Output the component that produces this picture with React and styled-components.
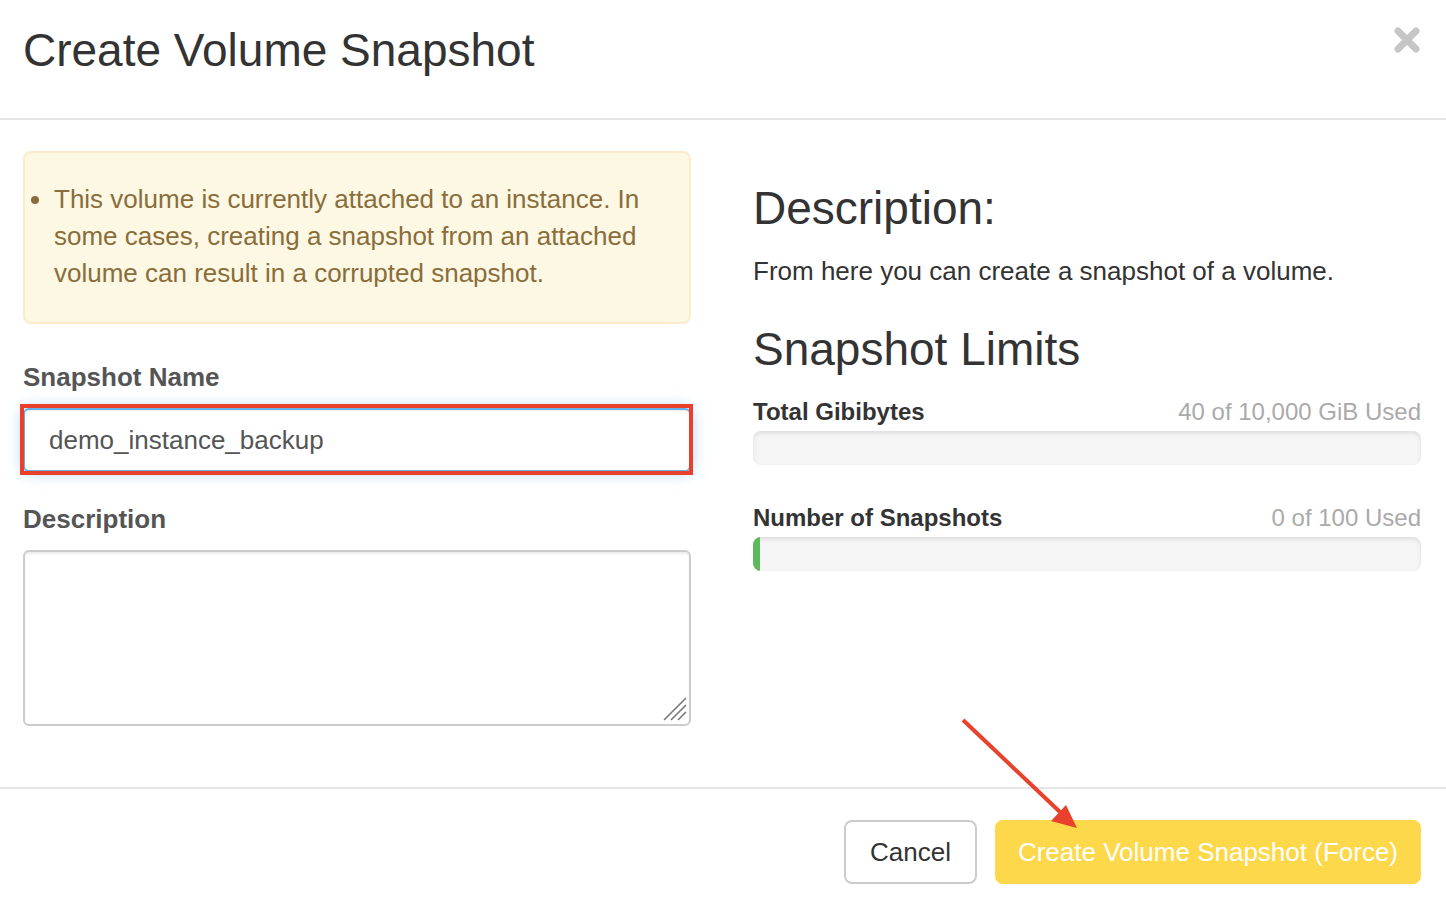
import React from 'react';
import styled, { createGlobalStyle } from 'styled-components';

const GlobalStyle = createGlobalStyle`
  html, body {
    margin: 0;
    padding: 0;
    background: #fff;
  }
  body {
    font-family: "Liberation Sans", Arial, Helvetica, sans-serif;
    color: #333;
  }
  * {
    box-sizing: border-box;
  }
`;

const Modal = styled('div')`
  position: relative;
  width: 1446px;
  height: 908px;
  background: #fff;
  overflow: hidden;
`;

const Header = styled('div')`
  height: 120px;
  padding: 25px 25px 0 23px;
  border-bottom: 2px solid #e5e5e5;
  display: flex;
  justify-content: space-between;
  align-items: flex-start;
`;

const Title = styled('h4')`
  margin: 0;
  font-size: 46px;
  line-height: 1.1;
  font-weight: 400;
  color: #333;
`;

const CloseButton = styled('button')`
  border: 0;
  background: none;
  padding: 0;
  margin-top: 2px;
  width: 28px;
  height: 26px;
  cursor: pointer;
`;

const Body = styled('div')`
  display: grid;
  grid-template-columns: 668px 668px;
  column-gap: 62px;
  padding: 31px 25px 60px 23px;
  height: 669px;
  border-bottom: 2px solid #e5e5e5;
`;

const Column = styled('div')`
  display: flex;
  flex-direction: column;
`;

const Alert = styled('div')`
  height: 173px;
  background: #fcf8e3;
  border: 2px solid #faebcc;
  border-radius: 8px;
  color: #8a6d3b;
  padding: 28px 20px 0 0;
`;

const AlertList = styled('ul')`
  margin: 0;
  padding-left: 29px;
  font-size: 26px;
  line-height: 37px;
`;

const FormGroup = styled('div')`
  margin-top: ${props => props.gap}px;
  display: flex;
  flex-direction: column;
`;

const Label = styled('label')`
  font-size: 26px;
  line-height: 37px;
  font-weight: 700;
  color: #555;
  margin-bottom: 12px;
`;

/* red call-out frame drawn around the focused name field */
const Highlight = styled('div')`
  position: relative;

  &::after {
    content: '';
    position: absolute;
    top: -4px;
    bottom: -3px;
    left: -3px;
    right: -2px;
    border: 4px solid #e8402a;
    pointer-events: none;
  }
`;

const NameInput = styled('input')`
  display: block;
  height: 64px;
  width: 100%;
  padding: 0 24px;
  font-family: inherit;
  font-size: 26px;
  color: #555;
  border: 2px solid #66afe9;
  border-radius: 6px;
  box-shadow: inset 0 1px 1px rgba(0, 0, 0, 0.075), 0 0 16px rgba(102, 175, 233, 0.6);
  outline: none;
`;

const TextAreaWrap = styled('div')`
  position: relative;
`;

const TextArea = styled('textarea')`
  display: block;
  height: 176px;
  width: 100%;
  padding: 12px 24px;
  font-family: inherit;
  font-size: 26px;
  border: 2px solid #ccc;
  border-radius: 6px;
  box-shadow: inset 0 2px 2px rgba(0, 0, 0, 0.075);
  resize: none;
`;

const Grip = styled('svg')`
  position: absolute;
  right: 3px;
  bottom: 4px;
  pointer-events: none;
`;

const Heading = styled('h3')`
  margin: ${props => props.top}px 0 0;
  font-size: 46px;
  line-height: 1.1;
  font-weight: 400;
  color: #333;
`;

const Paragraph = styled('p')`
  margin: 19px 0 0;
  font-size: 26px;
  line-height: 37px;
  color: #333;
`;

const QuotaRow = styled('div')`
  margin-top: ${props => props.top}px;
  display: flex;
  justify-content: space-between;
  align-items: baseline;
  font-size: 24px;
  line-height: 34px;
`;

const QuotaName = styled('strong')`
  font-weight: 700;
  color: #333;
`;

const QuotaUsage = styled('span')`
  color: #aaa;
`;

const Progress = styled('div')`
  margin-top: 2px;
  height: 34px;
  background: #f5f5f5;
  border-radius: 8px;
  box-shadow: inset 0 2px 4px rgba(0, 0, 0, 0.1);
  overflow: hidden;
`;

const ProgressFill = styled('div')`
  height: 100%;
  background: #5cb85c;
`;

const Footer = styled('div')`
  display: flex;
  justify-content: flex-end;
  gap: 18px;
  padding: 31px 25px 0;
`;

const Button = styled('button')`
  height: 64px;
  padding: 0 ${props => (props.primary ? 21 : 24)}px;
  font-family: inherit;
  font-size: 26px;
  border-radius: 8px;
  border: 2px solid ${props => (props.primary ? '#fcd84a' : '#ccc')};
  background: ${props => (props.primary ? '#fcd84a' : '#fff')};
  color: ${props => (props.primary ? '#fff' : '#333')};
  cursor: pointer;
`;

const Pointer = styled('svg')`
  position: absolute;
  left: 955px;
  top: 712px;
  pointer-events: none;
`;

const quotas = [
  { name: 'Total Gibibytes', usage: '40 of 10,000 GiB Used', fill: '0px' },
  { name: 'Number of Snapshots', usage: '0 of 100 Used', fill: '7px' },
];

const App = () => (
  <Modal>
    <GlobalStyle />
    <Header>
      <Title>Create Volume Snapshot</Title>
      <CloseButton aria-label="Close">
        <svg width="28" height="26" viewBox="0 0 28 26">
          <path d="M5 4 L23 22 M23 4 L5 22" stroke="#c6c6c6" strokeWidth="7" strokeLinecap="round" />
        </svg>
      </CloseButton>
    </Header>
    <Body>
      <Column>
        <Alert>
          <AlertList>
            <li>
              This volume is currently attached to an instance. In some cases, creating a
              snapshot from an attached volume can result in a corrupted snapshot.
            </li>
          </AlertList>
        </Alert>
        <FormGroup gap={35}>
          <Label>Snapshot Name</Label>
          <Highlight>
            <NameInput defaultValue="demo_instance_backup" />
          </Highlight>
        </FormGroup>
        <FormGroup gap={29}>
          <Label>Description</Label>
          <TextAreaWrap>
            <TextArea />
            <Grip width="28" height="28" viewBox="0 0 28 28">
              <path
                d="M26 4 L4 26 M26 11 L11 26 M26 18 L18 26"
                stroke="#777"
                strokeWidth="1.6"
              />
            </Grip>
          </TextAreaWrap>
        </FormGroup>
      </Column>
      <Column>
        <Heading top={32}>Description:</Heading>
        <Paragraph>From here you can create a snapshot of a volume.</Paragraph>
        <Heading top={34}>Snapshot Limits</Heading>
        {quotas.map((q, i) => (
          <React.Fragment key={q.name}>
            <QuotaRow top={i === 0 ? 21 : 36}>
              <QuotaName>{q.name}</QuotaName>
              <QuotaUsage>{q.usage}</QuotaUsage>
            </QuotaRow>
            <Progress>
              <ProgressFill style={{ width: q.fill }} />
            </Progress>
          </React.Fragment>
        ))}
      </Column>
    </Body>
    <Footer>
      <Button>Cancel</Button>
      <Button primary>Create Volume Snapshot (Force)</Button>
    </Footer>
    <Pointer width="140" height="130" viewBox="0 0 140 130">
      <line x1="8" y1="8" x2="105" y2="100" stroke="#e8412c" strokeWidth="4" />
      <polygon points="122,116 96,109 111,93" fill="#e8412c" />
    </Pointer>
  </Modal>
);

export default App;
